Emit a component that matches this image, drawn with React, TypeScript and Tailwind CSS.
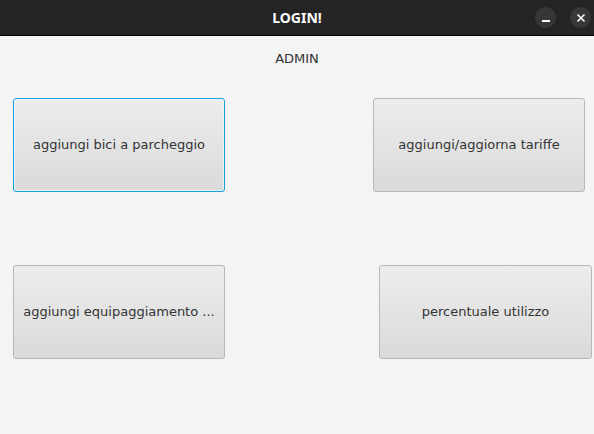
const FONT = { fontFamily: '"DejaVu Sans", "Noto Sans", sans-serif' };

function FxButton({ label, focused, className }: { label: string; focused?: boolean; className?: string }) {
  return (
    <button
      className={
        "flex h-[94px] items-center justify-center rounded-[3px] bg-gradient-to-b from-[#ededed] to-[#dadada] text-[13px] text-[#333333] " +
        (focused
          ? "border border-[#1aa0dc] shadow-[inset_0_0_0_1px_#e8f4fa] "
          : "border border-[#b8b8b8] ") +
        (className ?? "")
      }
      style={FONT}
    >
      {label}
    </button>
  );
}

export default function App() {
  return (
    <div className="flex h-[434px] w-[594px] flex-col overflow-hidden bg-[#f4f4f4]" style={FONT}>
      {/* title bar */}
      <div className="relative flex h-[36px] shrink-0 items-center justify-center border-b border-black bg-[#242424]">
        <span
          className="text-[14px] font-bold text-white"
          style={{ fontFamily: '"Noto Sans", "DejaVu Sans", sans-serif' }}
        >
          LOGIN!
        </span>
        <div className="absolute right-[3px] top-[7px] flex gap-[14px]">
          <div className="flex h-[21px] w-[21px] items-center justify-center rounded-full bg-[#373737]">
            <div className="mt-[6px] h-[2px] w-[8px] bg-white" />
          </div>
          <div className="flex h-[21px] w-[21px] items-center justify-center rounded-full bg-[#373737]">
            <svg width="10" height="10" viewBox="0 0 10 10">
              <path d="M1.5 1.5L8.5 8.5M8.5 1.5L1.5 8.5" stroke="white" strokeWidth="1.6" />
            </svg>
          </div>
        </div>
      </div>

      <div className="flex h-[44px] items-center justify-center pt-[1px] text-[13px] text-[#333333]">ADMIN</div>

      <div className="mt-[18px] flex justify-between pl-[13px] pr-[9px]">
        <FxButton label="aggiungi bici a parcheggio" focused className="w-[212px]" />
        <FxButton label="aggiungi/aggiorna tariffe" className="w-[212px]" />
      </div>

      <div className="mt-[73px] flex justify-between pl-[13px] pr-[2px]">
        <FxButton label="aggiungi equipaggiamento ..." className="w-[212px]" />
        <FxButton label="percentuale utilizzo" className="w-[213px]" />
      </div>
    </div>
  );
}
